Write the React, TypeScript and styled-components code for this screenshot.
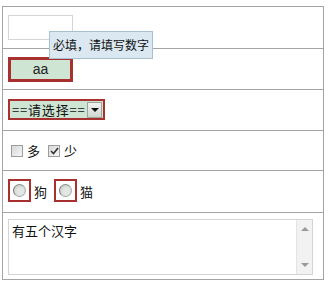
import React, { useState } from 'react';
import styled, { createGlobalStyle } from 'styled-components';

const GlobalStyle = createGlobalStyle`
  body {
    margin: 0;
    background: #ffffff;
    font-family: 'Liberation Sans', 'Noto Sans CJK SC', sans-serif;
  }
`;

const Page = styled.div`
  padding: 6px 0 0 2px;
  position: relative;
`;

const Table = styled.div`
  width: 322px;
  border: 1px solid #a4a4a4;
  box-sizing: border-box;
  display: flex;
  flex-direction: column;
`;

const Row = styled.div<{ h: number }>`
  height: ${(props) => props.h}px;
  box-sizing: border-box;
  border-bottom: 1px solid #a4a4a4;
  display: flex;
  align-items: center;
  padding-left: 5px;
  gap: 3px;
  &:last-child {
    border-bottom: none;
  }
`;

const TextInput = styled.input`
  width: 65px;
  height: 25px;
  box-sizing: border-box;
  border: 1px solid #d4d4d4;
  outline: none;
  padding: 0 3px;
`;

const Tip = styled.div`
  position: absolute;
  left: 49px;
  top: 31px;
  width: 104px;
  height: 28px;
  box-sizing: border-box;
  background: #dbe8f1;
  border: 1px solid #a9c0ce;
  font-family: 'Noto Sans CJK SC', sans-serif;
  font-size: 12px;
  line-height: 26px;
  padding-left: 3px;
  color: #111;
  white-space: nowrap;
`;

const Invalid = `
  border: 3px solid #a8302f;
  background: #cfe5d3;
  box-sizing: border-box;
`;

const Button = styled.button`
  ${Invalid}
  width: 65px;
  height: 25px;
  font-family: 'Liberation Sans', sans-serif;
  font-size: 14px;
  color: #222;
  padding: 0;
  cursor: pointer;
`;

const Select = styled.div`
  ${Invalid}
  border-width: 2px;
  width: 97px;
  height: 21px;
  display: flex;
  align-items: center;
  justify-content: space-between;
  padding: 0 1px 0 2px;
  font-family: 'Noto Sans CJK SC', sans-serif;
  font-size: 13px;
  letter-spacing: 0.8px;
  color: #111;
  margin-top: -1px;
`;

const DropButton = styled.span`
  width: 15px;
  height: 16px;
  box-sizing: border-box;
  border: 1px solid #9aa59c;
  background: linear-gradient(#f2f2f2, #cfd6d0);
  display: flex;
  align-items: center;
  justify-content: center;
`;

const Arrow = styled.span<{ up?: boolean; light?: boolean }>`
  width: 0;
  height: 0;
  border-left: 4px solid transparent;
  border-right: 4px solid transparent;
  ${(props) =>
    props.up
      ? `border-bottom: 4px solid ${props.light ? '#9a9a9a' : '#111'};`
      : `border-top: 4px solid ${props.light ? '#9a9a9a' : '#111'};`}
`;

const Label = styled.span`
  font-family: 'Noto Sans CJK SC', sans-serif;
  font-size: 13px;
  color: #111;
  margin-right: 4px;
`;

const CheckBox = styled.span`
  width: 12px;
  height: 12px;
  box-sizing: border-box;
  border: 1px solid #9d9d9d;
  background: linear-gradient(135deg, #d8d8d8, #f6f6f6);
  display: inline-flex;
  align-items: center;
  justify-content: center;
  margin: 0 4px 0 4px;
  &:first-child {
    margin-left: 3px;
  }
`;

const RadioWrap = styled.span`
  ${Invalid}
  border-width: 2px;
  background: transparent;
  width: 23px;
  height: 23px;
  display: inline-flex;
  align-items: center;
  justify-content: center;
  margin-top: -2px;
`;

const RadioDot = styled.span`
  width: 13px;
  height: 13px;
  border-radius: 50%;
  box-sizing: border-box;
  border: 1px solid #a8aca9;
  border-left-color: #6f7571;
  border-top-color: #8a908c;
  background: radial-gradient(circle at 60% 60%, #e3e7e4 35%, #bcc3be 100%);
`;

const AreaBox = styled.div`
  width: 305px;
  height: 56px;
  box-sizing: border-box;
  border: 1px solid #d4d4d4;
  display: flex;
  margin-top: 1px;
`;

const Area = styled.textarea`
  flex: 1;
  border: none;
  outline: none;
  resize: none;
  overflow: hidden;
  font-family: 'Noto Sans CJK SC', sans-serif;
  font-size: 13px;
  line-height: 16px;
  padding: 3px 3px;
  color: #111;
`;

const ScrollBar = styled.div`
  width: 16px;
  background: #f1f2f1;
  border-left: 1px solid #e4e4e4;
  display: flex;
  flex-direction: column;
  align-items: center;
  justify-content: space-between;
  padding: 7px 0;
  box-sizing: border-box;
`;

export default function App() {
  const [text, setText] = useState('有五个汉字');

  return (
    <Page>
      <GlobalStyle />
      <Table>
        <Row h={42}>
          <TextInput />
        </Row>
        <Row h={41}>
          <Button>aa</Button>
        </Row>
        <Row h={41}>
          <Select>
            ==请选择==
            <DropButton>
              <Arrow />
            </DropButton>
          </Select>
        </Row>
        <Row h={40} style={{ gap: 0 }}>
          <CheckBox />
          <Label>多</Label>
          <CheckBox>
            <svg width="9" height="8" viewBox="0 0 9 8">
              <path d="M1 4 L3.5 6.5 L8 1" fill="none" stroke="#333" strokeWidth="1.6" />
            </svg>
          </CheckBox>
          <Label>少</Label>
        </Row>
        <Row h={42}>
          <RadioWrap>
            <RadioDot />
          </RadioWrap>
          <Label>狗</Label>
          <RadioWrap>
            <RadioDot />
          </RadioWrap>
          <Label>猫</Label>
        </Row>
        <Row h={66}>
          <AreaBox>
            <Area value={text} onChange={(e) => setText(e.target.value)} />
            <ScrollBar>
              <Arrow up light />
              <Arrow light />
            </ScrollBar>
          </AreaBox>
        </Row>
      </Table>
      <Tip>必填，请填写数字</Tip>
    </Page>
  );
}
